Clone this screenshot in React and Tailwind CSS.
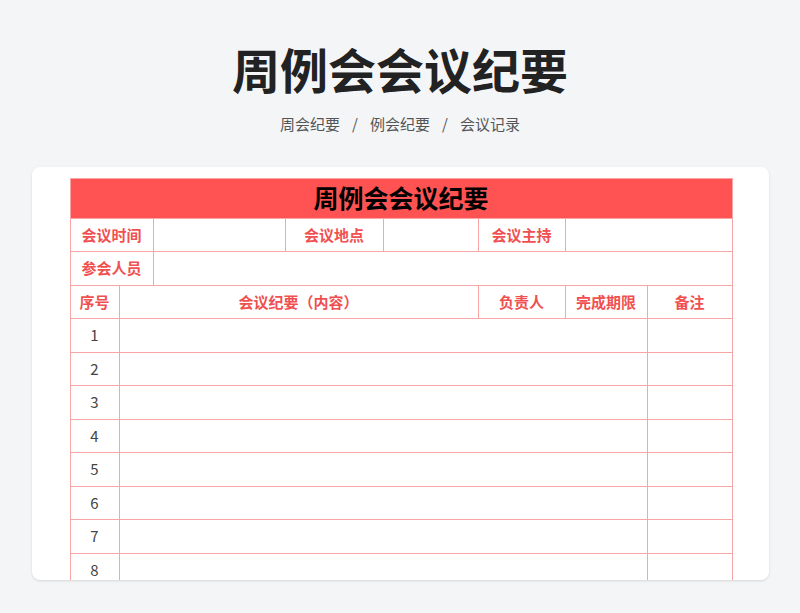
export default function App() {
  const font = { fontFamily: '"Noto Sans CJK SC", "Noto Sans", sans-serif' };
  const cell = 'border border-[#f8a5a5] h-[33.5px] p-0';
  const label = `${cell} text-[15px] font-bold text-[#f05050] text-center`;
  return (
    <div className="w-[800px] h-[613px] bg-[#f4f5f7] flex flex-col items-center overflow-hidden" style={font}>
      <h1 className="mt-[38px] text-[48px] leading-[60px] font-bold text-[#222]">周例会会议纪要</h1>
      <div className="mt-[15px] flex gap-3 text-[15px] text-[#555]">
        <span>周会纪要</span><span>/</span><span>例会纪要</span><span>/</span><span>会议记录</span>
      </div>
      <div className="mt-[31px] w-[737px] h-[413px] bg-white rounded-lg shadow-sm overflow-hidden pt-[11px] pl-[38px]">
        <table className="border-collapse table-fixed w-[662px]">
          <colgroup>
            {[49, 34, 132, 98, 95, 87, 82, 85].map((w, i) => <col key={i} style={{ width: w }} />)}
          </colgroup>
          <tbody>
            <tr>
              <td colSpan={8} className="border border-[#f8a5a5] bg-[#ff5252] h-[40px] text-center text-[25px] font-bold text-black">周例会会议纪要</td>
            </tr>
            <tr>
              <td colSpan={2} className={label}>会议时间</td>
              <td className={cell}></td>
              <td className={label}>会议地点</td>
              <td className={cell}></td>
              <td className={label}>会议主持</td>
              <td colSpan={2} className={cell}></td>
            </tr>
            <tr>
              <td colSpan={2} className={label}>参会人员</td>
              <td colSpan={6} className={cell}></td>
            </tr>
            <tr>
              <td className={label}>序号</td>
              <td colSpan={4} className={label}>会议纪要（内容）</td>
              <td className={label}>负责人</td>
              <td className={label}>完成期限</td>
              <td className={label}>备注</td>
            </tr>
            {[1, 2, 3, 4, 5, 6, 7, 8].map(n => (
              <tr key={n}>
                <td className={`${cell} text-center text-[15px] text-[#444]`}>{n}</td>
                <td colSpan={6} className={cell}></td>
                <td className={cell}></td>
              </tr>
            ))}
          </tbody>
        </table>
      </div>
    </div>
  );
}
